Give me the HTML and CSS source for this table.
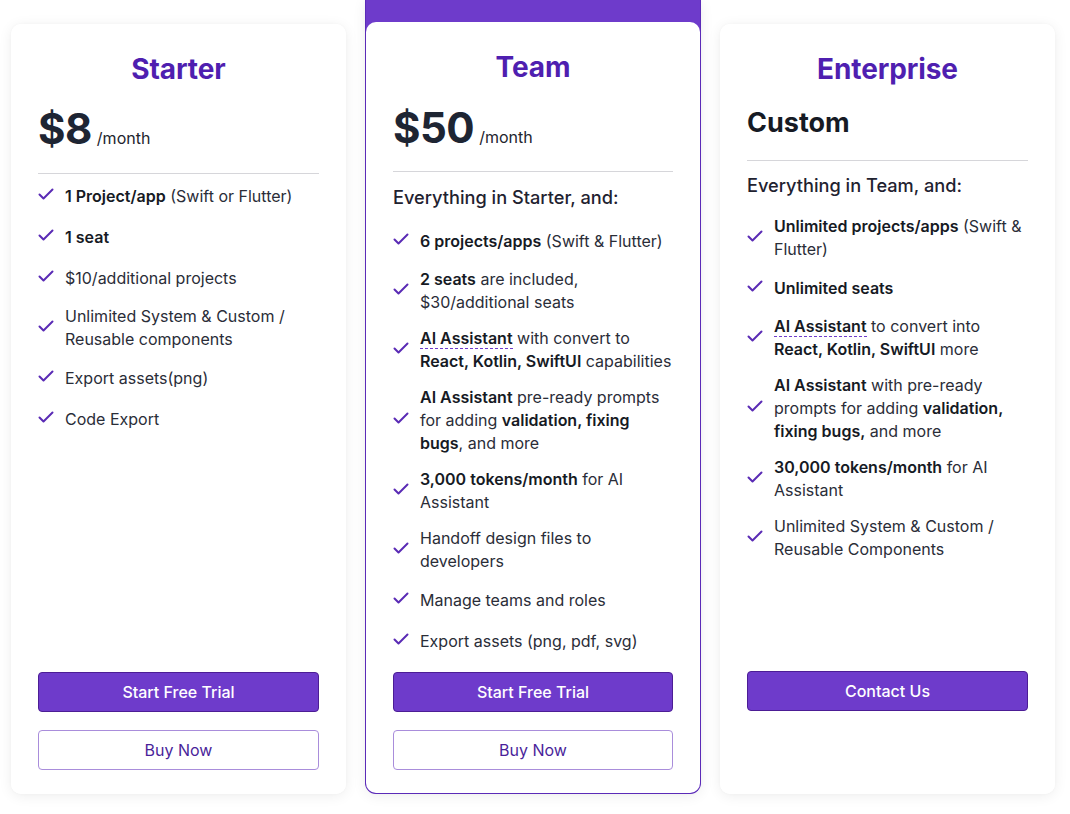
FILE: index.html
```html
<!DOCTYPE html>
<html>
<head>
<meta charset="utf-8">
<link rel="stylesheet" href="styles.css">
</head>
<body>
<div class="plans">
  <div class="card">
    <div class="inner">
      <h2 class="title">Starter</h2>
      <div class="price"><span class="amount">$8</span><span class="per">/month</span></div>
      <hr class="divider">
      <ul class="features">
        <li><svg class="check" viewBox="0 0 16 12"><path d="M1.5 6.5 L5.5 10.5 L14.5 1.5"/></svg><div class="txt"><b>1 Project/app</b> (Swift or Flutter)</div></li>
        <li><svg class="check" viewBox="0 0 16 12"><path d="M1.5 6.5 L5.5 10.5 L14.5 1.5"/></svg><div class="txt"><b>1 seat</b></div></li>
        <li><svg class="check" viewBox="0 0 16 12"><path d="M1.5 6.5 L5.5 10.5 L14.5 1.5"/></svg><div class="txt">$10/additional projects</div></li>
        <li><svg class="check" viewBox="0 0 16 12"><path d="M1.5 6.5 L5.5 10.5 L14.5 1.5"/></svg><div class="txt">Unlimited System &amp; Custom / Reusable components</div></li>
        <li><svg class="check" viewBox="0 0 16 12"><path d="M1.5 6.5 L5.5 10.5 L14.5 1.5"/></svg><div class="txt">Export assets(png)</div></li>
        <li><svg class="check" viewBox="0 0 16 12"><path d="M1.5 6.5 L5.5 10.5 L14.5 1.5"/></svg><div class="txt">Code Export</div></li>
      </ul>
      <div class="actions">
        <button class="btn primary">Start Free Trial</button>
        <button class="btn outline">Buy Now</button>
      </div>
    </div>
  </div>

  <div class="card featured">
    <div class="inner">
      <h2 class="title">Team</h2>
      <div class="price"><span class="amount">$50</span><span class="per">/month</span></div>
      <hr class="divider">
      <p class="lead">Everything in Starter, and:</p>
      <ul class="features">
        <li><svg class="check" viewBox="0 0 16 12"><path d="M1.5 6.5 L5.5 10.5 L14.5 1.5"/></svg><div class="txt"><b>6 projects/apps</b> (Swift &amp; Flutter)</div></li>
        <li><svg class="check" viewBox="0 0 16 12"><path d="M1.5 6.5 L5.5 10.5 L14.5 1.5"/></svg><div class="txt"><b>2 seats</b> are included, $30/additional seats</div></li>
        <li><svg class="check" viewBox="0 0 16 12"><path d="M1.5 6.5 L5.5 10.5 L14.5 1.5"/></svg><div class="txt"><b class="dotted">AI Assistant</b> with convert to <b>React, Kotlin, SwiftUI</b> capabilities</div></li>
        <li><svg class="check" viewBox="0 0 16 12"><path d="M1.5 6.5 L5.5 10.5 L14.5 1.5"/></svg><div class="txt"><b>AI Assistant</b> pre-ready prompts for adding <b>validation, fixing bugs</b>, and more</div></li>
        <li><svg class="check" viewBox="0 0 16 12"><path d="M1.5 6.5 L5.5 10.5 L14.5 1.5"/></svg><div class="txt"><b>3,000 tokens/month</b> for AI Assistant</div></li>
        <li><svg class="check" viewBox="0 0 16 12"><path d="M1.5 6.5 L5.5 10.5 L14.5 1.5"/></svg><div class="txt">Handoff design files to developers</div></li>
        <li><svg class="check" viewBox="0 0 16 12"><path d="M1.5 6.5 L5.5 10.5 L14.5 1.5"/></svg><div class="txt">Manage teams and roles</div></li>
        <li><svg class="check" viewBox="0 0 16 12"><path d="M1.5 6.5 L5.5 10.5 L14.5 1.5"/></svg><div class="txt">Export assets (png, pdf, svg)</div></li>
      </ul>
      <div class="actions">
        <button class="btn primary">Start Free Trial</button>
        <button class="btn outline">Buy Now</button>
      </div>
    </div>
  </div>

  <div class="card">
    <div class="inner">
      <h2 class="title">Enterprise</h2>
      <div class="custom">Custom</div>
      <hr class="divider">
      <p class="lead">Everything in Team, and:</p>
      <ul class="features">
        <li><svg class="check" viewBox="0 0 16 12"><path d="M1.5 6.5 L5.5 10.5 L14.5 1.5"/></svg><div class="txt"><b>Unlimited projects/apps</b> (Swift &amp; Flutter)</div></li>
        <li><svg class="check" viewBox="0 0 16 12"><path d="M1.5 6.5 L5.5 10.5 L14.5 1.5"/></svg><div class="txt"><b>Unlimited seats</b></div></li>
        <li><svg class="check" viewBox="0 0 16 12"><path d="M1.5 6.5 L5.5 10.5 L14.5 1.5"/></svg><div class="txt"><b class="dotted">AI Assistant</b> to convert into <b>React, Kotlin, SwiftUI</b> more</div></li>
        <li><svg class="check" viewBox="0 0 16 12"><path d="M1.5 6.5 L5.5 10.5 L14.5 1.5"/></svg><div class="txt"><b>AI Assistant</b> with pre-ready prompts for adding <b>validation, fixing bugs,</b> and more</div></li>
        <li><svg class="check" viewBox="0 0 16 12"><path d="M1.5 6.5 L5.5 10.5 L14.5 1.5"/></svg><div class="txt"><b>30,000 tokens/month</b> for AI Assistant</div></li>
        <li><svg class="check" viewBox="0 0 16 12"><path d="M1.5 6.5 L5.5 10.5 L14.5 1.5"/></svg><div class="txt">Unlimited System &amp; Custom / Reusable Components</div></li>
      </ul>
      <div class="actions single">
        <button class="btn primary">Contact Us</button>
      </div>
    </div>
  </div>
</div>
</body>
</html>
```

FILE: styles.css
```css
* { box-sizing: border-box; }
html, body { margin: 0; padding: 0; background: #ffffff; }
body {
  font-family: Inter, "Noto Sans", sans-serif;
  color: #1f2230;
  width: 1070px;
  height: 814px;
  overflow: hidden;
}
.plans {
  display: flex;
  gap: 19px;
  padding: 23px 0 0 11px;
  align-items: flex-end;
}
.card {
  width: 335px;
  height: 770px;
  background: #fff;
  border-radius: 10px;
  box-shadow: 0 2px 14px rgba(0, 0, 0, 0.07), 0 0 3px rgba(0,0,0,0.03);
  display: flex;
}
.card.featured {
  width: 336px;
  height: 794px;
  background: #6e3bcb;
  border: 1.5px solid #5b2bb8;
  border-top: none;
  border-radius: 0 0 11px 11px;
  padding-top: 22px;
  margin-top: -23px;
}
.inner {
  flex: 1;
  display: flex;
  flex-direction: column;
  padding: 28px 27px 24px 27px;
  background: #fff;
  border-radius: 10px;
}
.featured .inner { padding: 28px 27px 23px 27px; }
.title {
  margin: 0;
  text-align: center;
  font-size: 28px;
  line-height: 34px;
  font-weight: 700;
  color: #4f1fb0;
  letter-spacing: -0.1px;
}
.price {
  margin-top: 19px;
  display: flex;
  align-items: baseline;
  height: 48px;
}
.featured .price { margin-top: 20px; }
.amount {
  font-size: 42px;
  line-height: 48px;
  font-weight: 700;
  color: #1e2533;
  letter-spacing: -0.5px;
}
.per {
  font-size: 16px;
  margin-left: 5px;
  color: #22252e;
}
.custom {
  margin-top: 20px;
  font-size: 27px;
  line-height: 34px;
  font-weight: 700;
  color: #161a24;
}
.divider {
  border: none;
  border-top: 1px solid #d6d6da;
  margin: 20px 0 0 0;
  height: 0;
}
.featured .divider { margin-top: 19px; }
.lead {
  margin: 12px 0 0 0;
  font-size: 18.2px;
  line-height: 25px;
  font-weight: 500;
  color: #1f2230;
}
.featured .lead { margin-top: 13px; }
.features {
  list-style: none;
  margin: 8px 0 0 0;
  padding: 0;
  display: flex;
  flex-direction: column;
  gap: 13px;
  flex: 1;
}
.lead + .features { margin-top: 17px; }
.features li {
  display: flex;
  align-items: center;
  min-height: 28px;
  font-size: 16px;
  line-height: 23px;
  color: #2a2d38;
}
.txt { flex: 1; }
.features li b { font-weight: 600; color: #161a24; }
.dotted { border-bottom: 1.5px dashed #6e3bcb; }
.check {
  width: 16px;
  height: 12px;
  flex: none;
  margin-right: 11px;
  margin-top: -5px;
  fill: none;
  stroke: #5a2bb5;
  stroke-width: 2;
  stroke-linecap: round;
  stroke-linejoin: round;
}
.actions {
  display: flex;
  flex-direction: column;
  gap: 18px;
}
.actions.single { margin-bottom: 59px; }
.btn {
  height: 40px;
  border-radius: 4px;
  font-family: Inter, "Noto Sans", sans-serif;
  font-size: 16px;
  cursor: pointer;
}
.btn.primary {
  background: #6e3bcb;
  border: 1px solid #4c1d95;
  color: #fff;
  font-weight: 500;
}
.btn.outline {
  background: #fff;
  border: 1px solid #a98ddb;
  color: #4a1f9a;
  font-weight: 400;
}
```
